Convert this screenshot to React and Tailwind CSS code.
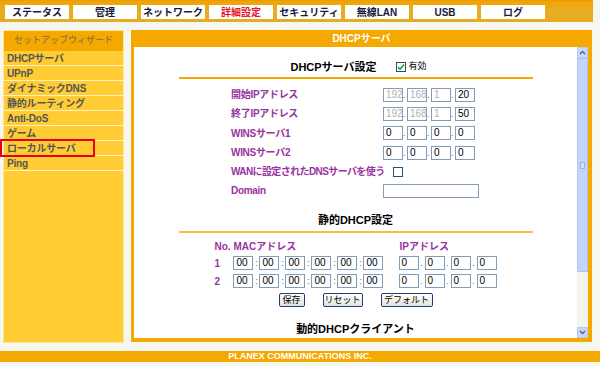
import React from 'react';

const font = { fontFamily: '"Liberation Sans", "Noto Sans CJK JP", sans-serif' };

const tabs = ['ステータス', '管理', 'ネットワーク', '詳細設定', 'セキュリティ', '無線LAN', 'USB', 'ログ'];
const menu = ['DHCPサーバ', 'UPnP', 'ダイナミックDNS', '静的ルーティング', 'Anti-DoS', 'ゲーム', 'ローカルサーバ', 'Ping'];

const Box = ({ value, disabled, w = 'w-[20px]' }) => (
  <div
    className={`${w} h-[14px] border border-[#7f9db9] bg-white text-[10px] leading-[12px] pl-[2px] ${
      disabled ? 'text-[#b0b0b0]' : 'text-black'
    }`}
  >
    {value}
  </div>
);

const IpRow = ({ values, disabled = [] }) => (
  <div className="flex items-center">
    {values.map((v, i) => (
      <React.Fragment key={i}>
        {i > 0 && <span className="w-[4px] text-[9px] leading-[14px] text-[#666] self-end">.</span>}
        <Box value={v} disabled={disabled[i]} />
      </React.Fragment>
    ))}
  </div>
);

const Label = ({ children }) => (
  <div className="w-[152px] text-[10px] font-bold text-[#9933a0] whitespace-nowrap tracking-[-0.3px]">{children}</div>
);

const Btn = ({ children, w }) => (
  <button
    className={`${w} h-[14px] rounded-[2px] border border-[#1f3e7a] bg-gradient-to-b from-white to-[#e3e3dc] text-[9px] leading-[12px] text-black whitespace-nowrap`}
  >
    {children}
  </button>
);

const MacRow = ({ no }) => (
  <div className="flex items-center h-[18px]">
    <div className="w-[20px] text-[10px] font-bold text-[#9933a0]">{no}</div>
    <div className="flex items-center">
      {[0, 1, 2, 3, 4, 5].map((i) => (
        <React.Fragment key={i}>
          {i > 0 && <span className="w-[6px] text-center text-[9px] leading-[14px] text-[#666]">:</span>}
          <Box value="00" />
        </React.Fragment>
      ))}
    </div>
    <div className="w-[16px]" />
    <div className="flex items-center">
      {[0, 1, 2, 3].map((i) => (
        <React.Fragment key={i}>
          {i > 0 && <span className="w-[6px] text-center text-[9px] leading-[14px] text-[#666] self-end">.</span>}
          <Box value="0" />
        </React.Fragment>
      ))}
    </div>
  </div>
);

export default function App() {
  return (
    <div className="w-[600px] h-[366px] bg-[#f7f7f2] overflow-hidden" style={font}>
      {/* top tabs */}
      <div className="w-[593px] h-[22px] bg-gradient-to-b from-[#f0a400] via-[#e8ad22] to-[#e6ab20] border-t border-[#f09a00] flex gap-[4px] pl-[5px] pt-[4px]">
        {tabs.map((t) => (
          <div
            key={t}
            className={`w-[64px] h-[14px] bg-white flex items-center justify-center text-[10px] font-bold whitespace-nowrap ${
              t === '詳細設定' ? 'text-[#e8102a]' : 'text-[#1a1a3a]'
            }`}
          >
            {t}
          </div>
        ))}
      </div>

      <div className="flex mt-[8px] pl-[3px] gap-[7px]">
        {/* sidebar */}
        <div className="w-[121px] h-[313px] bg-[#ffcc33] border border-[#ffe79a] flex flex-col">
          <div className="h-[20px] bg-[#f5a800] flex items-center justify-center text-[9px] text-[#7a6a50] whitespace-nowrap">
            セットアップウィザード
          </div>
          {menu.map((m) => (
            <div
              key={m}
              className="relative h-[15px] border-b border-[#fff2c0] pl-[3px] flex items-center text-[10px] font-bold text-[#555] whitespace-nowrap tracking-[-0.2px]"
            >
              {m}
              {m === 'ローカルサーバ' && (
                <div className="absolute -left-[4px] -top-[2px] w-[95px] h-[18px] border-2 border-[#e60012]" />
              )}
            </div>
          ))}
        </div>

        {/* main panel */}
        <div className="w-[461px] h-[312px] flex flex-col">
          <div className="h-[17px] bg-[#f5a800] flex items-center justify-center text-white text-[10px] font-bold">
            DHCPサーバ
          </div>
          <div className="flex-1 flex border-l-[3px] border-r-[4px] border-b-[4px] border-[#f5a800] overflow-hidden">
            <div className="flex-1 bg-white flex flex-col items-center pt-[12px]">
              <div className="flex items-center h-[16px] pl-[6px]">
                <span className="text-[11px] font-bold text-black">DHCPサーバ設定</span>
                <span className="ml-[19px] w-[10px] h-[10px] border border-[#1c5180] bg-white flex items-center justify-center">
                  <svg width="8" height="8" viewBox="0 0 8 8">
                    <path d="M1 4 L3 6.2 L7 1.5" stroke="#21a121" strokeWidth="1.6" fill="none" />
                  </svg>
                </span>
                <span className="ml-[3px] text-[9px] text-black">有効</span>
              </div>
              <div className="w-[354px] h-[2px] bg-[#f5a800] mt-[2px]" />

              <div className="w-[249px] mt-[6px] flex flex-col">
                <div className="h-[19px] flex items-center">
                  <Label>開始IPアドレス</Label>
                  <IpRow values={['192', '168', '1', '20']} disabled={[true, true, true, false]} />
                </div>
                <div className="h-[19px] flex items-center">
                  <Label>終了IPアドレス</Label>
                  <IpRow values={['192', '168', '1', '50']} disabled={[true, true, true, false]} />
                </div>
                <div className="h-[20px] flex items-center">
                  <Label>WINSサーバ1</Label>
                  <IpRow values={['0', '0', '0', '0']} />
                </div>
                <div className="h-[19px] flex items-center">
                  <Label>WINSサーバ2</Label>
                  <IpRow values={['0', '0', '0', '0']} />
                </div>
                <div className="h-[19px] flex items-center">
                  <div className="text-[10px] font-bold text-[#9933a0] whitespace-nowrap tracking-[-0.6px]">
                    WANに設定されたDNSサーバを使う
                  </div>
                  <span className="ml-[8px] w-[10px] h-[10px] border border-[#1c5180] bg-white" />
                </div>
                <div className="h-[19px] flex items-center">
                  <Label>Domain</Label>
                  <Box value="" w="w-[96px]" />
                </div>
              </div>

              <div className="mt-[12px] text-[11px] font-bold text-black h-[16px] leading-[16px]">静的DHCP設定</div>
              <div className="w-[354px] h-[2px] bg-[#f5c040] mt-[3px]" />

              <div className="w-[282px] mt-[5px] flex flex-col">
                <div className="flex items-center h-[16px] text-[10px] font-bold text-[#9933a0] whitespace-nowrap">
                  <div className="w-[19px]">No.</div>
                  <div className="w-[166px]">MACアドレス</div>
                  <div>IPアドレス</div>
                </div>
                <MacRow no="1" />
                <MacRow no="2" />
              </div>

              <div className="flex gap-[18px] mt-[3px]">
                <Btn w="w-[26px]">保存</Btn>
                <Btn w="w-[40px]">リセット</Btn>
                <Btn w="w-[52px]">デフォルト</Btn>
              </div>

              <div className="mt-[14px] text-[11px] font-bold text-black">動的DHCPクライアント</div>
            </div>

            {/* scrollbar */}
            <div className="w-[11px] bg-[#f4f4ee] flex flex-col">
              <div className="h-[11px] bg-[#c8d8f8] border border-[#b8ccf0] flex items-center justify-center">
                <svg width="7" height="5" viewBox="0 0 7 5">
                  <path d="M1 4 L3.5 1.5 L6 4" stroke="#4d6185" strokeWidth="1.4" fill="none" />
                </svg>
              </div>
              <div className="h-[214px] bg-[#c3d4fb] border border-[#aec3f0] flex items-center justify-center">
                <div className="w-[5px] h-[7px] border border-[#9fb3e0] bg-[#d3e0fc]" />
              </div>
              <div className="flex-1" />
              <div className="h-[11px] bg-[#c8d8f8] border border-[#b8ccf0] flex items-center justify-center">
                <svg width="7" height="5" viewBox="0 0 7 5">
                  <path d="M1 1 L3.5 3.5 L6 1" stroke="#4d6185" strokeWidth="1.4" fill="none" />
                </svg>
              </div>
            </div>
          </div>
        </div>
      </div>

      {/* footer */}
      <div className="mt-[8px] h-[11px] bg-[#f5a800] flex items-center justify-center text-white text-[9px] font-bold">
        PLANEX COMMUNICATIONS INC.
      </div>
    </div>
  );
}
